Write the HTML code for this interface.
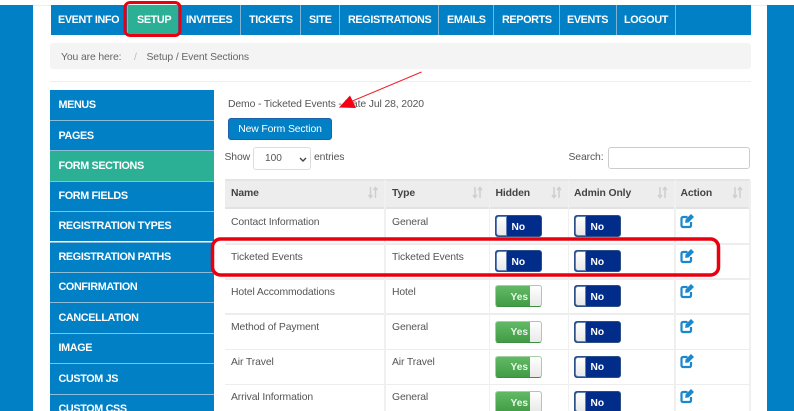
<!DOCTYPE html>
<html lang="en"><head><meta charset="utf-8"><title>Event Sections</title>
<style>
html,body{margin:0;padding:0;background:#fff}
#p{position:relative;width:794px;height:411px;overflow:hidden;background:#fff;font-family:"Liberation Sans",sans-serif;color:#555;font-size:10.2px;filter:blur(.3px)}
#p div{position:absolute;white-space:nowrap}
.b{background:#0180c6}
.n{top:5px;height:30px;line-height:30px;color:#fff;font-weight:bold;font-size:10.8px;letter-spacing:-.36px;border-right:1px solid #7fb3d6;box-sizing:border-box}
.s{left:49.5px;width:164px;height:30px;line-height:30px;background:#0180c6;color:#fff;font-weight:bold;font-size:10.8px;letter-spacing:-.36px;padding-left:9px;box-sizing:border-box}
.l{left:49.5px;width:164px;height:1px;background:#8dbcd9}
.t{color:#555;font-size:10.4px;letter-spacing:-.12px;line-height:14px}
.h{top:187px;font-weight:bold;font-size:10.4px;letter-spacing:-.12px;line-height:14px;color:#444}
.c{width:47px;height:22px;border-radius:3px;box-sizing:border-box;color:#fff;font-size:10.2px;line-height:22px}
.no{background:#012c8a;border:1px solid #2b4f86}
.no i{position:absolute;left:0;top:0;width:11px;height:20px;background:linear-gradient(#fff,#e8e8e8);border:1px solid #5f7fb5;border-radius:3px 0 0 3px;box-sizing:border-box}
.no b{position:absolute;left:15.5px;top:.5px;font-weight:bold}
.yes{background:linear-gradient(#62b965,#419c45);border:1px solid #a4cfa5;border-bottom-color:#3c8f40}
.yes i{position:absolute;right:0;top:0;width:11px;height:20px;background:linear-gradient(#fff,#e8e8e8);border-radius:0 2px 2px 0}
.yes b{position:absolute;left:14.5px;top:.5px;font-weight:bold;color:#e8f5e8}
.rl{left:225px;width:525px;height:1.5px;background:#ededed}
.cl{width:1.5px;background:#f0f0f0}
svg{position:absolute}
</style></head><body><div id="p">
<div style="left:33px;top:5px;width:734px;height:1px;background:#eee"></div>
<div class="b" style="left:0;top:5px;width:33px;height:406px"></div>
<div class="b" style="left:767px;top:5px;width:27px;height:406px"></div>

<div class="b" style="left:51px;top:5px;width:700px;height:30px"></div>
<div class="n" style="left:51px;width:77px;padding-left:7px">EVENT INFO</div>
<div class="n" style="left:128px;width:50px;background:#2bb095;border-right:0;padding-left:9px">SETUP</div>
<div class="n" style="left:178px;width:63px;padding-left:8px">INVITEES</div>
<div class="n" style="left:241px;width:60px;padding-left:8px">TICKETS</div>
<div class="n" style="left:301px;width:39px;padding-left:8px">SITE</div>
<div class="n" style="left:340px;width:99px;padding-left:8px">REGISTRATIONS</div>
<div class="n" style="left:439px;width:55px;padding-left:8px">EMAILS</div>
<div class="n" style="left:494px;width:66px;padding-left:8px">REPORTS</div>
<div class="n" style="left:560px;width:57px;padding-left:7px">EVENTS</div>
<div class="n" style="left:617px;width:59px;padding-left:7px">LOGOUT</div>

<div style="left:50px;top:43px;width:701px;height:26px;background:#f4f4f4;border-radius:3px"></div>
<div class="t" style="left:61px;top:50.500px;color:#666">You are here:</div>
<div class="t" style="left:134px;top:50.500px;color:#bbb">/</div>
<div class="t" style="left:146.500px;top:50.500px;color:#666">Setup / Event Sections</div>
<div style="left:50px;top:81px;width:701px;height:1px;background:#eee"></div>

<div class="s" style="top:90px">MENUS</div>
<div class="s" style="top:120.500px">PAGES</div>
<div class="s" style="top:151px;background:#2bb095">FORM SECTIONS</div>
<div class="s" style="top:181px">FORM FIELDS</div>
<div class="s" style="top:211px">REGISTRATION TYPES</div>
<div class="s" style="top:242px">REGISTRATION PATHS</div>
<div class="s" style="top:272px">CONFIRMATION</div>
<div class="s" style="top:302.500px">CANCELLATION</div>
<div class="s" style="top:333px">IMAGE</div>
<div class="s" style="top:363.500px">CUSTOM JS</div>
<div class="s" style="top:394px">CUSTOM CSS</div>
<div class="l" style="top:120px"></div><div class="l" style="top:150px"></div><div class="l" style="top:181px"></div><div class="l" style="top:211px"></div><div class="l" style="top:241.500px"></div><div class="l" style="top:272px"></div><div class="l" style="top:302px"></div><div class="l" style="top:333px"></div><div class="l" style="top:363px"></div><div class="l" style="top:394px"></div>

<div class="t" style="left:228px;top:97.500px">Demo - Ticketed Events - Date Jul 28, 2020</div>
<div style="left:228px;top:118px;width:104px;height:22px;background:#0180c6;border:1px solid #1d5fa8;border-radius:3px;box-sizing:border-box;color:#fff;font-size:10.4px;letter-spacing:-.12px;line-height:21px;text-align:center">New Form Section</div>
<div class="t" style="left:224.500px;top:151px">Show</div>
<div style="left:253px;top:147px;width:58px;height:23px;border:1px solid #ddd;border-radius:3px;box-sizing:border-box;line-height:22px;padding-left:11px;color:#555;font-size:10.15px">100
<svg style="left:45px;top:9px" width="8" height="6" viewBox="0 0 8 6"><path d="M1 1l3 3 3-3" fill="none" stroke="#444" stroke-width="1.4"/></svg></div>
<div class="t" style="left:314px;top:151px">entries</div>
<div class="t" style="left:568.500px;top:150.500px">Search:</div>
<div style="left:608px;top:147px;width:142px;height:22px;border:1px solid #ccc;border-radius:3px;box-sizing:border-box"></div>

<div style="left:225px;top:179px;width:525px;height:28px;background:#ededed;border-radius:3px 3px 0 0"></div>
<div class="rl" style="top:179px;background:#e4e4e4"></div>
<div class="rl" style="top:207px;background:#e2e2e2"></div>
<div class="rl" style="top:243px"></div><div class="rl" style="top:278px"></div><div class="rl" style="top:313px"></div><div class="rl" style="top:348.500px"></div><div class="rl" style="top:383.500px"></div>
<div class="cl" style="left:384px;top:180px;height:231px"></div>
<div class="cl" style="left:488.500px;top:180px;height:231px"></div>
<div class="cl" style="left:567.500px;top:180px;height:231px"></div>
<div class="cl" style="left:674px;top:180px;height:231px"></div>
<div class="cl" style="left:749px;top:180px;height:231px"></div>

<div class="h" style="left:231px">Name</div><div class="h" style="left:392px">Type</div><div class="h" style="left:495.500px">Hidden</div><div class="h" style="left:574px">Admin Only</div><div class="h" style="left:680.500px">Action</div>

<div class="t" style="left:231px;top:215.500px">Contact Information</div><div class="t" style="left:392px;top:215.500px">General</div>
<div class="t" style="left:231px;top:250.500px">Ticketed Events</div><div class="t" style="left:392px;top:250.500px">Ticketed Events</div>
<div class="t" style="left:231px;top:285.500px">Hotel Accommodations</div><div class="t" style="left:392px;top:285.500px">Hotel</div>
<div class="t" style="left:231px;top:320.500px">Method of Payment</div><div class="t" style="left:392px;top:320.500px">General</div>
<div class="t" style="left:231px;top:355.500px">Air Travel</div><div class="t" style="left:392px;top:355.500px">Air Travel</div>
<div class="t" style="left:231px;top:390.500px">Arrival Information</div><div class="t" style="left:392px;top:390.500px">General</div>

<div class="c no" style="left:495px;top:215px"><i></i><b>No</b></div><div class="c no" style="left:574px;top:215px"><i></i><b>No</b></div>
<div class="c no" style="left:495px;top:250px"><i></i><b>No</b></div><div class="c no" style="left:574px;top:250px"><i></i><b>No</b></div>
<div class="c yes" style="left:495px;top:285px"><b>Yes</b><i></i></div><div class="c no" style="left:574px;top:285px"><i></i><b>No</b></div>
<div class="c yes" style="left:495px;top:320.500px"><b>Yes</b><i></i></div><div class="c no" style="left:574px;top:320.500px"><i></i><b>No</b></div>
<div class="c yes" style="left:495px;top:355.500px"><b>Yes</b><i></i></div><div class="c no" style="left:574px;top:355.500px"><i></i><b>No</b></div>
<div class="c yes" style="left:495px;top:391px"><b>Yes</b><i></i></div><div class="c no" style="left:574px;top:391px"><i></i><b>No</b></div>

<svg width="794" height="411" style="left:0;top:0" viewBox="0 0 794 411">
<defs>
<g id="e"><path d="M691 222v3.500a1.500 1.500 0 0 1-1.500 1.500h-6.500a1.500 1.500 0 0 1-1.500-1.500v-7a1.500 1.500 0 0 1 1.500-1.500h4.500" fill="none" stroke="#1b87cc" stroke-width="2.200"/><path d="M685.500 219.500l5.500-5.500 3 3-5.500 5.500-3.300.4z" fill="#1b87cc"/></g>
<g id="so"><path d="M2 0v10M0 8l2 2.500L4 8M7 11V1M5 3l2-2.500L9 3" fill="none" stroke="#cfcfcf" stroke-width="1.500"/></g>
</defs>
<use href="#e"/><use href="#e" y="35"/><use href="#e" y="70"/><use href="#e" y="105"/><use href="#e" y="140"/><use href="#e" y="175"/>
<use href="#so" x="368.500" y="187"/><use href="#so" x="473" y="187"/><use href="#so" x="552" y="187"/><use href="#so" x="658" y="187"/><use href="#so" x="733" y="187"/>
<rect x="125" y="2.500" width="55" height="33" rx="5" fill="none" stroke="#e8000f" stroke-width="3"/>
<rect x="212.500" y="239" width="506" height="36" rx="8" fill="none" stroke="#e8000f" stroke-width="3.500"/>
<path d="M421.500 72L350 102" stroke="#f0202a" stroke-width="1" fill="none"/>
<path d="M339 107.500L350 95.500 356 108z" fill="#f50012"/>
</svg>
</div></body></html>
